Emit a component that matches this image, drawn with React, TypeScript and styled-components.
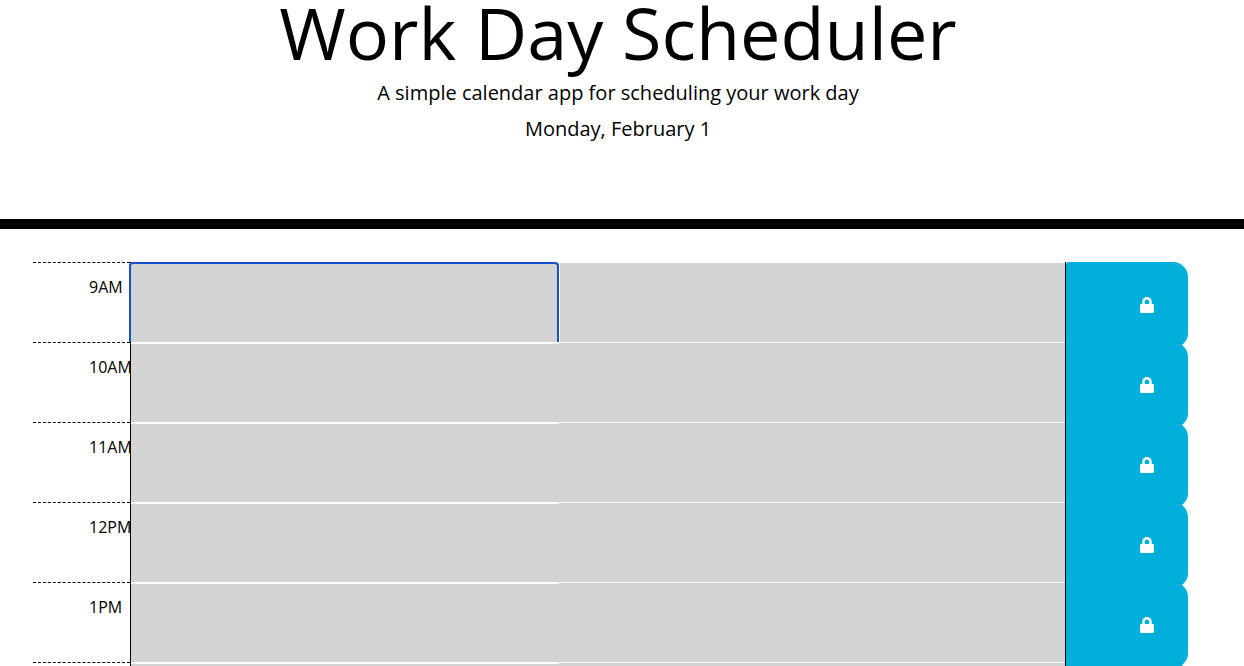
import React from "react";
import styled, { createGlobalStyle, css } from "styled-components";
import { FaLock } from "react-icons/fa";

const GlobalStyle = createGlobalStyle`
  *, *::before, *::after { box-sizing: border-box; }
  body {
    margin: 0;
    background: #fff;
    color: #000;
    font-family: "Open Sans", sans-serif;
    font-size: 16px;
    line-height: 24px;
  }
`;

const Page = styled.div`
  height: 100vh;
  overflow: hidden;
`;

const Header = styled.header`
  padding: 0 8px 69px 0;
  border-bottom: 10px solid #000;
  text-align: center;
`;

const Title = styled.h1`
  margin: 0 0 14px;
  font-size: 72px;
  font-weight: 400;
  line-height: 64px;
`;

const Lead = styled.p`
  margin: 0 0 6px;
  font-size: 20px;
  line-height: 30px;
`;

const Schedule = styled.main`
  padding: 33px 56px 0 33px;
`;

const TimeBlock = styled.form`
  position: relative;
  display: grid;
  grid-template-columns: 97px minmax(0, 1fr) 122px;
  height: 80px;
`;

const Hour = styled.label`
  padding: 12px 0 0 56px;
  border-top: 1px dashed #000;
  white-space: nowrap;
`;

const Slot = styled.div`
  display: flex;
  height: 80px;
  background: #d3d3d3;
  border: solid #000;
  border-width: 0 1px;
  box-shadow: inset 0 1px 0 #fff;
`;

const Task = styled.textarea<{ $active: boolean }>`
  width: 45.8%;
  height: 80px;
  margin: 0;
  padding: 8px;
  border: 0;
  border-top: 2px solid #fff;
  outline: 0;
  resize: none;
  overflow: hidden;
  background: #d3d3d3;
  color: #000;
  font: inherit;
  ${({ $active }) =>
    $active &&
    css`
      width: calc(45.8% + 2px);
      margin-left: -2px;
      border: 2px solid #1452cc;
      border-bottom: 0;
      border-radius: 4px 4px 0 0;
      box-shadow: 1px 0 0 #fff;
    `}
`;

const SaveButton = styled.button`
  display: flex;
  align-items: center;
  justify-content: flex-end;
  height: 86px;
  padding: 0 33px 0 0;
  border: 0;
  border-radius: 3px 15px 15px 3px;
  background: #00afda;
  color: #fff;
  font-size: 16px;
  cursor: pointer;
`;

const hours = ["9AM", "10AM", "11AM", "12PM", "1PM", "2PM"];

export default function App() {
  return (
    <Page>
      <GlobalStyle />
      <Header>
        <Title>Work Day Scheduler</Title>
        <Lead>A simple calendar app for scheduling your work day</Lead>
        <Lead>Monday, February 1</Lead>
      </Header>
      <Schedule>
        {hours.map((hour, index) => (
          <TimeBlock key={hour} onSubmit={(event) => event.preventDefault()}>
            <Hour htmlFor={`task-${hour}`}>{hour}</Hour>
            <Slot>
              <Task id={`task-${hour}`} $active={index === 0} />
            </Slot>
            <SaveButton type="submit" aria-label={`Save ${hour}`}>
              <FaLock aria-hidden="true" />
            </SaveButton>
          </TimeBlock>
        ))}
      </Schedule>
    </Page>
  );
}
